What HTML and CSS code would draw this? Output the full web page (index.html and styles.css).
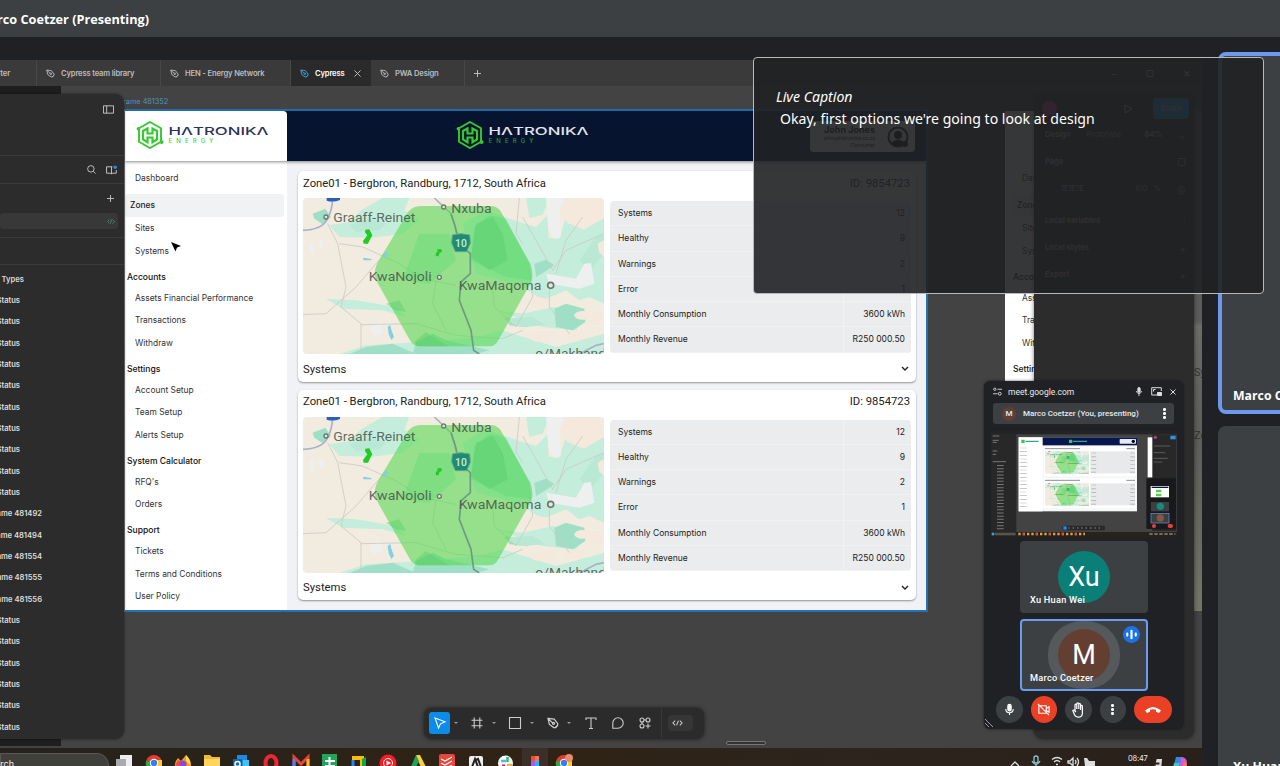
FILE: index.html
```html
<!DOCTYPE html>
<html lang="en">
<head>
<meta charset="utf-8">
<title>Marco Coetzer (Presenting)</title>
<link rel="stylesheet" href="styles.css">
</head>
<body>
<svg class="defs" aria-hidden="true">
  <symbol id="pen" viewBox="0 0 10 10"><g fill="none" stroke="currentColor" stroke-width="1"><path d="M.8 1.2 6 1.8 9 5.6 8.8 7 7.200 8.800 5.600 8.800 2 6.200Z M1 1.400 4.800 5"/><circle cx="5.400" cy="5.300" r=".9"/><path d="M6.800 8.900 9 6.800"/></g></symbol>
  <symbol id="mark" viewBox="0 0 28 28"><g fill="none" stroke="#35c932" stroke-width="1.900"><path d="M14 1 25 7.200V20.800L14 27 3 20.800V7.200Z"/><path d="M11.500 7.500 7 10v8.500l4.500 2.700v-4.700h5v4.700l4.500-2.700V10l-4.500-2.500v5h-5Z" stroke-width="2.200"/></g><g fill="#35c932"><circle cx="2.400" cy="7.800" r="1.800"/><circle cx="25.600" cy="21" r="1.900"/></g></symbol>
  <symbol id="map" viewBox="41 293 903 468" preserveAspectRatio="none">
    <rect x="41" y="293" width="903" height="468" fill="#f2ebdf"/>
    <g fill="#c5eddb">
      <path d="M120 375 180 365 215 330 280 293H360L345 330 390 360 340 400 250 412 150 410Z"/>
      <path d="M520 370 590 330 690 365 740 380 775 345 778 412 810 415 830 350 944 345V610L900 590 870 600 830 570 760 600 700 560 640 540 560 520Z"/>
      <path d="M110 595 200 600 320 620 350 650 280 630 160 625Z"/>
      <path d="M560 710 640 690 720 715 800 740 944 700V761H150L230 735 400 725Z"/>
      <path d="M620 630 700 640 790 620 900 640 860 690 760 680Z"/>
      <path d="M710 293h70l-20 50-40 10Z"/>
    </g>
    <g fill="#9fdfc6">
      <path d="M70 340 108 325 125 350 100 372 75 355Z"/>
      <path d="M735 490 770 478 795 495 770 512 740 530Z"/>
      <path d="M795 625 830 610 885 625 888 665 850 690 800 680Z"/>
      <path d="M380 725 430 700 470 720 600 750 560 761H370Z M230 740l80-10 70 31H180Z M650 650l40 10 30 20-60-5Z"/>
    </g>
    <g fill="#b9e8d4"><path d="M180 375l60-20 50 15-20 20-70 5Z M870 480l50-70 24-10v60l-40 50Z M640 655l90-5 40 25-80 5Z"/></g>
    <g fill="#f5e8dc"><ellipse cx="880" cy="645" rx="25" ry="13"/><ellipse cx="918" cy="655" rx="24" ry="16"/><ellipse cx="860" cy="705" rx="35" ry="14"/><path d="M810 293h134v60l-60 35-50-20-30-40Z M925 430l19-10v50l-15-15Z M700 700l90-5 10 16-60 14Z M690 610l60-20 40 10-30 25Z"/></g>
    <g fill="#eef0ef"><path d="M770 293h55l-15 40 5 75-20 8-18-30Z M770 520 860 535 885 490 905 488 915 550 870 565 780 550Z M90 420h12v25h-12Z M62 425h10v35h-10Z M240 680l30-15 10 30-25 10Z"/></g>
    <g fill="none" stroke="#c9cbc6" stroke-width="2.500">
      <path d="M115 370 145 430 170 560 155 620 215 670V761 M41 643 110 640 200 560 290 455 M150 430 220 440 320 485 400 535 500 555 M215 673 380 670 500 705 640 715 700 690 M440 540 430 610 470 690 M610 560 615 620 680 680 730 590 720 510 M690 293 680 400 700 430 M780 570V620L840 700 M944 400 830 450 790 510 740 420 700 350 M880 350 830 420 800 520"/>
    </g>
    <g fill="none" stroke="#a9b1c8" stroke-width="5"><path d="M41 390Q95 388 112 360T130 293 M435 293 485 340 495 370 510 440 M870 761 920 735 944 730"/></g>
    <path d="M395 317H605Q622 317 634 333L723 490Q734 520 726 545L627 720Q618 738 600 738H390Q372 738 362 720L263 545Q250 520 263 490L356 335Q370 317 395 317Z" fill="#4fd84a" fill-opacity=".56"/>
    <path d="M555 380 600 345 650 355 720 490 726 540 650 530 600 505 545 480Z M390 400 480 400 500 480 420 550 340 540Z" fill="#55d873" fill-opacity=".35"/>
    <path d="M290 610 330 600 350 635 320 630Z M560 370 610 350 640 400 655 480 600 510 545 470Z M375 725 410 695 440 715 480 738H385Z" fill="#5cce6c" fill-opacity=".45"/>
    <path d="M485 340 498 380 510 430 543 460V520L515 545 510 600 545 690 553 750 570 761" fill="none" stroke="#6c9c82" stroke-width="5"/>
    <path d="M112 293h40v6q-20 8-40 2Z" fill="#2860bd"/>
    <path d="M228 388l12-1 9 18-9 16-4 9h-13l-2-8 13-17-7-9Z M444 447l12-1 2 8-8 5-2 9-9-1 1-9 4-3Z" fill="#20cc24"/>
    <path d="M295 680l8-6 3 14 8 22-8 9-8-18Z M282 458l12-4v12l-10 6Z M222 472l24 4v4h-24Z" fill="#83cfe4"/>
    <path d="M489 404 515 400 541 404 543 428 532 454H498L487 428Z" fill="#208b75" stroke="#62a88b" stroke-width="3"/>
    <g fill="#dfe9e2" stroke="#6d7771" stroke-width="4"><circle cx="110" cy="350" r="6"/><circle cx="463" cy="320" r="6"/><circle cx="450" cy="531" r="6"/><circle cx="784" cy="555" r="9" stroke-width="5"/></g>
    <g font-family="Roboto" font-size="41" fill="#47534b" fill-opacity=".86">
      <text x="132" y="366" textLength="246" lengthAdjust="spacingAndGlyphs">Graaff-Reinet</text>
      <text x="486" y="338" textLength="121" lengthAdjust="spacingAndGlyphs">Nxuba</text>
      <text x="238" y="543" textLength="189" lengthAdjust="spacingAndGlyphs">KwaNojoli</text>
      <text x="508" y="569" textLength="248" lengthAdjust="spacingAndGlyphs">KwaMaqoma</text>
      <text x="738" y="773" textLength="212" lengthAdjust="spacingAndGlyphs">o/Makhand</text>
    </g>
    <text x="497" y="441" font-family="Roboto" font-size="31" font-weight="500" fill="#c9f0d5" textLength="36">10</text>
  </symbol>
</svg>

<header class="topbar"><span>Marco Coetzer (Presenting)</span></header>

<main class="stage">
  <section class="share">
    <nav class="tabs">
      <div class="tab tab-first"><span>Starter</span></div>
      <div class="tab tab-lib"><svg><use href="#pen"/></svg><span>Cypress team library</span></div>
      <div class="tab tab-hen"><svg><use href="#pen"/></svg><span>HEN - Energy Network</span></div>
      <div class="tab tab-on"><svg><use href="#pen"/></svg><span>Cypress</span><svg class="x" viewBox="0 0 8 8"><path d="M.5.5l7 7M7.500.5l-7 7"/></svg></div>
      <div class="tab tab-pwa"><svg><use href="#pen"/></svg><span>PWA Design</span></div>
      <svg class="plus" viewBox="0 0 8 8"><path d="M4 0v8M0 4h8"/></svg>
      <div class="wincontrols"><span>–</span><span>▢</span><span>✕</span></div>
    </nav>

    <div class="canvas">
      <div class="rail rail-top"></div>
      <div class="rail rail-bottom"></div>
      <span class="frame-label">Frame 481352</span>

      <article class="frame">
        <header class="app-head">
          <div class="brandbox">
            <svg class="brand" viewBox="0 0 134 28"><use href="#mark" width="28" height="28"/><text x="32.500" y="14.300" textLength="100" lengthAdjust="spacingAndGlyphs" class="word dark">HΛTRONIKΛ</text><text x="32.500" y="22" textLength="45" class="sub">ENERGY</text></svg>
          </div>
          <div class="bar">
            <svg class="brand" viewBox="0 0 134 28"><use href="#mark" width="28" height="28"/><text x="32.500" y="14.300" textLength="100" lengthAdjust="spacingAndGlyphs" class="word">HΛTRONIKΛ</text><text x="32.500" y="22" textLength="45" class="sub deep">ENERGY</text></svg>
            <div class="user"><div><b>John Jones</b><small>john@hatronika.co.za</small><small>Consumer</small></div>
              <svg viewBox="0 0 22 22"><circle cx="11" cy="11" r="9.500" fill="none" stroke="#111" stroke-width="2"/><circle cx="11" cy="9" r="4"/><path d="M4 17q7-7 14 0l-3 3H7Z"/><circle cx="18" cy="18" r="3"/></svg></div>
          </div>
        </header>
        <div class="app-body">
          <aside class="menu">
            <a class="first">Dashboard</a>
            <a class="on">Zones</a>
            <a>Sites</a><a>Systems</a>
            <h4>Accounts</h4><a>Assets Financial Performance</a><a>Transactions</a><a>Withdraw</a>
            <h4>Settings</h4><a>Account Setup</a><a>Team Setup</a><a>Alerts Setup</a>
            <h4>System Calculator</h4><a>RFQ's</a><a>Orders</a>
            <h4>Support</h4><a>Tickets</a><a>Terms and Conditions</a><a>User Policy</a>
          </aside>
          <div class="zones">
            <section class="zone">
              <header><span>Zone01 - Bergbron, Randburg, 1712, South Africa</span><span>ID: 9854723</span></header>
              <div class="zone-body">
                <svg class="map"><use href="#map"/></svg>
                <dl>
                  <dt>Systems</dt><dd>12</dd><dt>Healthy</dt><dd>9</dd><dt>Warnings</dt><dd>2</dd><dt>Error</dt><dd>1</dd><dt>Monthly Consumption</dt><dd>3600 kWh</dd><dt>Monthly Revenue</dt><dd>R250 000.50</dd>
                </dl>
              </div>
              <footer><span>Systems</span><svg viewBox="0 0 8 6"><path d="M1 1l3 3 3-3"/></svg></footer>
            </section>
            <section class="zone">
              <header><span>Zone01 - Bergbron, Randburg, 1712, South Africa</span><span>ID: 9854723</span></header>
              <div class="zone-body">
                <svg class="map"><use href="#map"/></svg>
                <dl>
                  <dt>Systems</dt><dd>12</dd><dt>Healthy</dt><dd>9</dd><dt>Warnings</dt><dd>2</dd><dt>Error</dt><dd>1</dd><dt>Monthly Consumption</dt><dd>3600 kWh</dd><dt>Monthly Revenue</dt><dd>R250 000.50</dd>
                </dl>
              </div>
              <footer><span>Systems</span><svg viewBox="0 0 8 6"><path d="M1 1l3 3 3-3"/></svg></footer>
            </section>
          </div>
        </div>
      </article>

      <article class="frame-next">
        <aside class="menu">
          <a class="first">Dashboard</a><a class="on">Zones</a><a>Sites</a><a>Systems</a>
          <h4>Accounts</h4><a>Assets</a><a>Transactions</a><a>Withdraw</a><h4>Settings</h4>
        </aside>
      </article>
      <div class="peek"><span>Systems</span><span>Zone01</span></div>

      <aside class="layers">
        <div class="layers-top"><svg viewBox="0 0 12 9"><path d="M.5.5h11v8H.5ZM4 .5v8"/></svg></div>
        <div class="layers-find"><svg viewBox="0 0 10 10"><circle cx="4.300" cy="4.300" r="3.600"/><path d="M7 7l2.500 2.500"/></svg><svg class="book" viewBox="0 0 12 10"><path d="M7 1.500H.6v7H5L6 9.500 7 8.500h4.200V5M6 1.500v8"/><circle cx="10" cy="2" r="1.900" fill="#2b8de0" stroke="none"/></svg></div>
        <div class="layers-add"><svg viewBox="0 0 8 8"><path d="M4 0v8M0 4h8"/></svg></div>
        <div class="layers-page"><svg viewBox="0 0 10 8"><path d="M3 1.500.8 4 3 6.500M7 1.500 9.200 4 7 6.500M5.800 1.500l-1.500 5"/></svg></div>
        <ul>
          <li class="wide">User Types</li>
          <li>Status</li><li>Status</li><li>Status</li><li>Status</li><li>Status</li><li>Status</li><li>Status</li><li>Status</li><li>Status</li><li>Status</li>
          <li class="fr">Frame 481492</li><li class="fr">Frame 481494</li><li class="fr">Frame 481554</li><li class="fr">Frame 481555</li><li class="fr">Frame 481556</li>
          <li>Status</li><li>Status</li><li>Status</li><li>Status</li><li>Status</li><li>Status</li>
        </ul>
      </aside>

      <aside class="props">
        <div class="props-top"><i class="ava"></i><svg viewBox="0 0 9 10"><path d="M1 1l7 4-7 4Z"/></svg><b>Share</b></div>
        <div class="row"><b>Design</b><span>Prototype</span><b class="end">84%</b><em>⌄</em></div>
        <div class="row"><b>Page</b><em class="end">▢</em></div>
        <div class="row"><span class="hex">1E1E1E</span><span class="end">100 &nbsp; %</span><em>◎</em></div>
        <div class="row gap"><b>Local variables</b><em class="end">⫶</em></div>
        <div class="row"><b>Local styles</b><em class="end">+</em></div>
        <div class="row"><b>Export</b><em class="end">+</em></div>
      </aside>

      <svg class="cursor" viewBox="0 0 10 10"><path d="M0 0 10 4 6 5.500 4.500 9.500Z"/></svg>

      <div class="tools">
        <span class="pick"><svg viewBox="0 0 14 14"><path d="M2 2l10 3.800-4.500 2L5.500 12Z"/></svg></span><i class="caret"></i>
        <svg class="t-frame" viewBox="0 0 14 14"><path d="M4.200 1.500v11M9.800 1.500v11M1.500 4.200h11M1.500 9.800h11"/></svg><i class="caret"></i>
        <svg class="t-rect" viewBox="0 0 14 14"><path d="M1.500 1.500h11v11h-11Z"/></svg><i class="caret"></i>
        <svg class="t-pen" viewBox="0 0 10 10"><use href="#pen"/></svg><i class="caret"></i>
        <svg class="t-text" viewBox="0 0 14 14"><path d="M2 4V2h10v2M7 2v10.500M5 12.500h4"/></svg>
        <svg class="t-note" viewBox="0 0 14 14"><path d="M1.800 12.200V7A5.200 5.200 0 1 1 7 12.200Z"/></svg>
        <svg class="t-res" viewBox="0 0 14 14"><circle cx="4" cy="4" r="2"/><circle cx="10" cy="4" r="2"/><circle cx="4" cy="10" r="2"/><path d="M10 7.500v5M7.500 10h5M6 4h2M4 6v2"/></svg>
        <span class="dev"><svg viewBox="0 0 12 8"><path d="M3.500 1.500 1 4l2.500 2.500M8.500 1.500 11 4 8.500 6.500M7 1.500l-2 5"/></svg></span>
      </div>
      <div class="hscroll"></div>
    </div>

    <footer class="taskbar">
      <div class="search">Search</div>
      <svg class="apps" viewBox="0 0 470 18">
        <rect x="412" y="0" width="26" height="18" fill="#3a3028"/>
        <g transform="translate(0 2)">
        <rect x="10" y="5" width="12" height="16" fill="#eee"/><rect x="6" y="9" width="10" height="12" fill="#aaa"/>
        <g id="chrome"><circle cx="44" cy="13" r="8" fill="#e53c2d"/><path d="M36 11q-1 5 2 9l6-7Z" fill="#2da44e"/><path d="M44 10h8v9h-6Z" fill="#ffc928"/><circle cx="44" cy="13" r="4.200" fill="#fff"/><circle cx="44" cy="13" r="3.200" fill="#357fe8"/></g>
        <path d="M65 19q-1-7 3-11l3 3 5-6q6 6 5 14Z" fill="#ff961f"/><path d="M65 16l3-6 4 3 5 6H66Z" fill="#e94c4b"/><circle cx="73" cy="14" r="3.500" fill="#8c48d2"/><path d="M76 5q6 6 4 10l-4-4Z" fill="#ffdc40"/>
        <path d="M94 5h6l2 2h8v12H94Z" fill="#f1bb32"/><path d="M94 9h16v10H94Z" fill="#ffd65b"/>
        <path d="M127 5h10v14h-10Z" fill="#2389d8"/><path d="M123 9h9v10h-9Z" fill="#0a67b8"/><circle cx="127.500" cy="14" r="2.500" fill="none" stroke="#fff" stroke-width="1.500"/><path d="M133 10h6v9h-6Z" fill="#42c2f5"/>
        <ellipse cx="161" cy="13" rx="5.500" ry="7" fill="none" stroke="#ee2635" stroke-width="4"/>
        <path d="M184 19V7l7 7 7-7v12" fill="none" stroke="#ea4335" stroke-width="3"/><path d="M184 9v10" stroke="#4285f4" stroke-width="3"/><path d="M198 9v10" stroke="#f5b82e" stroke-width="3"/>
        <rect x="212" y="4" width="15" height="16" fill="#25a35a"/><path d="M215 11h10M219.500 7v12M215 16h10" stroke="#fff" stroke-width="2"/>
        <path d="M242 8h10v11" fill="none" stroke="#fbbc04" stroke-width="4"/><path d="M243 10v9" stroke="#2684fc" stroke-width="3"/><path d="M252 9l4-2v12h-4Z" fill="#0aaa4c"/>
        <circle cx="278" cy="13" r="8.500" fill="#f51d25"/><circle cx="278" cy="13" r="4.500" fill="none" stroke="#fff"/><path d="M276.500 10.500 281 13l-4.500 2.500Z" fill="#fff"/>
        <path d="M306 5h4l7 14h-5l-4-8Z" fill="#ffcf36"/><path d="M306 5l3 6-4 8h-5Z" fill="#1ea55b"/>
        <rect x="329" y="4" width="16" height="17" rx="2" fill="#e8473c"/><path d="M331 9l4 2 7-4M331 13l4 2 7-4M331 17l4 2 7-4" fill="none" stroke="#fff" stroke-width="1.200"/>
        <rect x="359" y="6" width="14" height="14" rx="2" fill="#eee"/><path d="M362 17l3-8 3 8M366 10l2-1 3 8" fill="none" stroke="#222" stroke-width="2"/>
        <circle cx="395.500" cy="13" r="7.500" fill="#f7f7f7"/><path d="M391 11h5" stroke="#36c5f0" stroke-width="2.500"/><path d="M397.500 7v5" stroke="#2eb67d" stroke-width="2.500"/><path d="M392 16h3" stroke="#e01e5a" stroke-width="3"/><path d="M397 15h5" stroke="#ecb22e" stroke-width="2.500"/>
        <path d="M421 6h4v5h-4Z" fill="#f24e1e"/><path d="M425 6h4v5h-4Z" fill="#ff7262"/><path d="M421 11h4v7h-4Z" fill="#a259ff"/><path d="M425 11h4v7h-4Z" fill="#1abcfe"/>
        <use href="#chrome" x="410"/><circle cx="459" cy="8" r="4" fill="#e88c6a"/>
        </g>
      </svg>
      <div class="tray">
        <svg viewBox="0 0 90 18"><g transform="translate(0 2)"><g fill="none" stroke="#ddd" stroke-width="1.300"><path d="M2 16l4-4 4 4"/><rect x="25" y="6" width="4" height="7" rx="2" stroke="#8ec4cf"/><path d="M23 11q4 7 8 0M27 14v3" stroke="#8ec4cf"/><path d="M43 9.500q5-4 10 0M45 12q3-3 6 0M47 14.500h2" /><path d="M59 11h2l3-3v8l-3-3h-2ZM66 10q2 2 0 4M68 8q3 4 0 8"/></g><path d="M75 8h3l2 3h6v5H76Z" fill="#ddd"/></g></svg>
        <span>08:47</span>
        <svg class="bell" viewBox="0 0 10 12"><path d="M3 1h6L8 10H1l1-3h4V5H2Z" fill="#ddd"/></svg>
        <svg class="copilot" viewBox="0 0 16 12"><path d="M4 1h6l-4 11H1Z" fill="#2b8cec"/><path d="M9 1q5 0 6 5l-1 6H7Z" fill="#d05bd7"/><path d="M2 7h6l-1 5H1Z" fill="#42c3b5"/><path d="M12 6l3 2-1 4h-4Z" fill="#f2844b"/></svg>
      </div>
    </footer>

    <section class="pip">
      <header class="pip-title">
        <svg viewBox="0 0 10 9"><path d="M0 7h5M5 2h5"/><circle cx="2" cy="2" r="1.300"/><circle cx="7.500" cy="7" r="1.600"/></svg><span>meet.google.com</span>
        <svg class="mic" viewBox="0 0 8 10"><rect x="2.700" y=".5" width="2.600" height="5.500" rx="1.300" fill="#ddd"/><path d="M.8 4.500q3.200 6 6.400 0M4 7.500V10"/></svg>
        <svg class="back" viewBox="0 0 11 9"><path d="M6 8H.7V.7h9.600V4M2.500 4.500v-2h2"/><path d="M6.500 5.500h4v3h-4Z" fill="#ddd"/></svg>
        <svg class="close" viewBox="0 0 8 8"><path d="M1.500 1.500l5 5M6.500 1.500l-5 5"/></svg>
      </header>
      <div class="presenter"><i>M</i><span>Marco Coetzer (You, presenting)</span><b class="dots"><u></u><u></u><u></u></b></div>
      <svg class="mini" viewBox="0 0 558 351" preserveAspectRatio="none">
        <rect width="558" height="351" fill="#434343"/><rect width="558" height="10" fill="#242424"/><rect y="8" width="76" height="295" fill="#282828"/>
        <path d="M5 15h20M5 28h18M5 34h12M5 60h14M5 70h10M5 92h40" stroke="#777" stroke-width="3"/>
        <path d="M28 102V298" stroke="#777" stroke-width="20" stroke-dasharray="3 6.500"/>
        <rect x="83" y="19" width="355" height="222" fill="#f4f6f7"/><rect x="83" y="19" width="72" height="222" fill="#fff"/><rect x="155" y="19" width="283" height="24" fill="#07174d"/>
        <path d="M91 31h10M234 31h10" stroke="#36c94a" stroke-width="10"/><path d="M103 31h40M246 31h42" stroke="#38a68a" stroke-width="4"/><rect x="386" y="24" width="49" height="14" rx="2" fill="#e8e8ee"/><circle cx="427" cy="31" r="5"/>
        <path d="M97 50v184" stroke="#bbb" stroke-width="22" stroke-dasharray="2 9"/>
        <rect x="159" y="47" width="276" height="89" fill="#fff"/><rect x="159" y="142" width="276" height="90" fill="#fff"/>
        <path d="M162 53h105M406 53h26M162 148h105M406 148h26" stroke="#777" stroke-width="2.500"/>
        <use href="#map" x="162" y="60" width="132" height="68"/><use href="#map" x="162" y="156" width="132" height="68"/>
        <rect x="298" y="61" width="134" height="66" fill="#e8e9eb"/><rect x="298" y="157" width="134" height="66" fill="#e8e9eb"/>
        <path d="M308 65v61M425 65v61M308 161v61M425 161v61" stroke="#aaa" stroke-width="15" stroke-dasharray="2 9.500"/>
        <rect x="470" y="19" width="16" height="120" fill="#fff"/><rect x="484" y="10" width="72" height="290" fill="#282828"/><path d="M488 45h50M488 65h35M488 82h42M488 93h25" stroke="#666" stroke-width="2.500"/><rect x="538" y="14" width="16" height="11" fill="#2794e8"/><circle cx="493" cy="19" r="5" fill="#a9447a"/>
        <rect x="466" y="142" width="89" height="152" rx="4" fill="#18191b"/><rect x="479" y="165" width="55" height="34" fill="#fff"/><path d="M482 169h50" stroke="#07174d" stroke-width="4"/><path d="M495 180h16M495 192h16" stroke="#5bc952" stroke-width="8"/><rect x="480" y="213" width="54" height="28" fill="#3c4043"/><circle cx="508" cy="226" r="11" fill="#138b80"/><rect x="480" y="247" width="54" height="29" fill="#3c4043" stroke="#6b95e5" stroke-width="2"/><circle cx="508" cy="261" r="11" fill="#8a5543"/><g fill="#e94235"><circle cx="489" cy="285" r="6"/><rect x="530" y="279" width="16" height="12" rx="6"/></g>
        <rect x="214" y="284" width="128" height="14" rx="4" fill="#292929"/><rect x="217" y="286" width="10" height="10" fill="#1790f4"/>
        <path d="M232 291h100" stroke="#999" stroke-width="3" stroke-dasharray="4 9"/>
        <rect y="303" width="558" height="15" fill="#292219"/><path d="M2 309h8" stroke="#31a6ef" stroke-width="8"/><path d="M12 309h62" stroke="#555" stroke-width="8"/><path d="M82 309h200" stroke="#dda050" stroke-width="7" stroke-dasharray="7 6"/><path d="M96 309h180" stroke="#d94442" stroke-width="7" stroke-dasharray="5 34"/><path d="M475 309h78" stroke="#bbb" stroke-width="3" stroke-dasharray="10 5"/><rect y="318" width="558" height="33" fill="#202124"/>
      </svg>
      <div class="person"><i class="teal">Xu</i><span>Xu Huan Wei</span></div>
      <div class="person talking"><i class="halo"></i><i class="brown">M</i><span>Marco Coetzer</span><b><svg viewBox="0 0 16 16"><path d="M4 7v2M8 4.500v7M12 7v2"/></svg></b></div>
      <div class="calls">
        <span><svg viewBox="0 0 14 14"><rect x="5.200" y="1.500" width="3.600" height="7" rx="1.800" fill="#fff"/><path d="M3 6.500q0 4 4 4t4-4M7 10.500v2.500"/></svg></span>
        <span class="red"><svg viewBox="0 0 14 14"><path d="M2 3h8v8H2ZM10 6l3-2v6l-3-2M1 1l12 12"/></svg></span>
        <span><svg class="hand" viewBox="0 0 14 16"><path d="M4 9V3.200q0-1 .9-1t.9 1V7M5.800 7V1.800q0-1 1-1t1 1V7M7.800 7V2.500q0-1 .9-1t.9 1V8M9.600 8V4.300q0-1 .9-1t.9 1V11q0 4.200-4.200 4.200-2.500 0-3.700-2.500L1.800 8.500q1-1 2.200.5L5 10"/></svg></span>
        <span><b class="dots"><u></u><u></u><u></u></b></span>
        <span class="red end"><svg viewBox="0 0 18 10"><path d="M1 5.500Q9-1.500 17 5.500L15 8l-3-1.200V4.700Q9 3.800 6 4.700v2.100L3 8Z" fill="#fff" stroke="none"/></svg></span>
      </div>
      <svg class="grip" viewBox="0 0 8 8"><path d="M0 0l8 8M0 4l4 4"/></svg>
    </section>
  </section>

  <aside class="people">
    <div class="tile active"><span>Marco Coetzer</span></div>
    <div class="tile"><span>Xu Huan Wei</span></div>
  </aside>

  <section class="caption"><em>Live Caption</em><p>Okay, first options we're going to look at design</p></section>
</main>
</body>
</html>
```

FILE: styles.css
```css
* { box-sizing: border-box; }
body { margin: 0; width: 1280px; height: 766px; overflow: hidden; display: flex; flex-direction: column; background: #202124; font-family: Inter, sans-serif; }
svg { display: block; flex: none; }
.defs { position: absolute; width: 0; height: 0; }
i, em { font-style: normal; }

.topbar { height: 37px; flex: none; background: #3c4043; color: #fff; display: flex; align-items: center; }
.topbar span { width: 149px; display: flex; justify-content: flex-end; white-space: nowrap; font: 700 12.700px "Open Sans", sans-serif; }
.stage { flex: 1; display: flex; padding-top: 15px; position: relative; overflow: hidden; }
.share { width: 1202px; margin-top: 8px; display: flex; flex-direction: column; position: relative; flex: none; }

.tabs { height: 26px; flex: none; display: flex; align-items: stretch; background: #3a3a3a; color: #bdbdbd; font-size: 7.600px; font-weight: 600; letter-spacing: -.15px; }
.tab { display: flex; align-items: center; gap: 6px; padding-left: 9px; border-right: 1px solid #484848; white-space: nowrap; }
.tab svg { width: 9px; height: 9px; color: #bbb; }
.tab-first { width: 37px; padding: 0 26px 0 0; justify-content: flex-end; }
.tab-lib { width: 124px; }
.tab-hen { width: 130px; }
.tab-on { width: 80px; background: #2a2a2a; color: #fff; border: 0; }
.tab-on svg { color: #45a5e8; }
.tab .x { width: 7px; height: 7px; margin-left: 4px; }
.x, .plus { fill: none; stroke: #ccc; stroke-width: 1; }
.tab-pwa { width: 94px; }
.plus { width: 7px; height: 7px; align-self: center; margin-left: 9px; }
.wincontrols { margin-left: auto; width: 90px; display: flex; justify-content: space-between; align-items: center; padding-right: 11px; font-size: 9px; }

.canvas { flex: 1; position: relative; background: #434343; overflow: hidden; }
.rail { position: absolute; left: 0; width: 61px; height: 10px; background: #1e1e1e; }
.rail-top { top: 0; }
.rail-bottom { bottom: 2px; }
.frame-label { position: absolute; left: 119px; top: 11px; font-size: 7.300px; color: #4f94bd; }
.frame { position: absolute; left: 124px; top: 23px; width: 804px; height: 503px; border: 2px solid #2272b4; border-left: 1px solid #777; background: #f0f2f5; display: flex; flex-direction: column; }
.app-head { height: 50px; flex: none; display: flex; background: #07142f; box-shadow: 0 1px 3px #0007; position: relative; }
.brandbox { width: 162px; background: #fff; border-radius: 0 4px 0 0; padding: 10px 0 0 11px; }
.bar { flex: 1; display: flex; justify-content: space-between; padding: 10px 11px 0 169px; }
.brand { width: 134px; height: 28px; overflow: visible; }
.word { font: 500 11px Inter, sans-serif; fill: #e3e4ee; }
.dark { fill: #2a3358; }
.sub { font: 500 6px Inter, sans-serif; fill: #45cf45; }
.deep { fill: #239b30; }
.user { width: 105px; height: 31px; background: #fff; border-radius: 4px; display: flex; justify-content: flex-end; align-items: center; gap: 12px; padding-right: 6px; text-align: right; }
.user b, .user small { display: block; font-size: 9px; line-height: 10px; }
.user small { font-size: 5px; line-height: 7px; }
.user svg { width: 22px; height: 22px; }
.app-body { flex: 1; display: flex; min-height: 0; }
.menu { width: 162px; background: #fff; padding: 5.500px 3px 0 0; color: #333; font-size: 8.420px; }
.menu a, .menu h4 { display: block; height: 22.400px; line-height: 22.400px; padding-left: 10px; white-space: nowrap; }
.menu .first { margin-bottom: 5.500px; }
.menu .on { height: 23px; line-height: 23px; background: #f1f2f4; border-radius: 3px; padding-left: 5px; font-weight: 500; color: #222; }
.menu h4 { margin: 0; height: 24.800px; line-height: 19px; padding: 5.500px 0 0 2px; font-size: 8.550px; font-weight: 500; color: #111; }

.zones { flex: 1; padding: 10px 10px 0 11px; display: flex; flex-direction: column; gap: 8px; }
.zone { height: 210.500px; background: #fff; border-radius: 5px; box-shadow: 0 1px 2px #0006; padding: 0 5px; font-family: Roboto, sans-serif; color: #222; }
.zone header { height: 27px; display: flex; justify-content: space-between; align-items: center; font-size: 11.270px; padding: 0 1px 3px 0; }
.zone-body { display: flex; gap: 6px; }
.map { width: 301px; height: 156px; border-radius: 4px; overflow: hidden; }
.zone dl { margin: 3px 0 0; flex: 1; height: 151.500px; display: grid; grid-template-columns: 1fr 67px; grid-template-rows: repeat(6, 1fr); border-radius: 4px; overflow: hidden; background: #ebecee; font: 8.520px Inter, sans-serif; }
.zone dt, .zone dd { margin: 0; display: flex; align-items: center; border-bottom: 1px solid #f1f2f3; }
.zone dt { padding-left: 8px; border-right: 1px solid #f1f2f3; }
.zone dd { justify-content: flex-end; padding-right: 6px; white-space: nowrap; }
.zone footer { height: 28px; display: flex; justify-content: space-between; align-items: center; font-size: 11.300px; padding-top: 2px; padding-right: 2px; }
.zone footer svg { width: 8px; height: 6px; fill: none; stroke: #222; stroke-width: 1.400; }

.frame-next { position: absolute; left: 1005px; top: 25px; width: 29px; height: 499px; background: #fff; overflow: hidden; padding-top: 50px; }
.frame-next .menu { padding-left: 7px; }
.frame-next h4 { padding-left: 1px; }
.peek { position: absolute; left: 1194px; top: 25px; width: 8px; height: 500px; overflow: hidden; background: linear-gradient(#5c5c5b, #5c5c5b 42%, #6b6d68 43%, #646462 53%, #5c5e58 66%, #737568); color: #333; font: 11px Roboto, sans-serif; display: flex; flex-direction: column; gap: 50px; padding-top: 255px; }

.layers { position: absolute; left: 0; top: 8px; width: 124px; height: 645px; background: #2c2c2c; border-radius: 0 9px 9px 0; box-shadow: 0 0 3px #0008; overflow: hidden; color: #ddd; }
.layers svg { fill: none; stroke: #ccc; stroke-width: 1; }
.layers > div { display: flex; justify-content: flex-end; align-items: center; border-bottom: 1px solid #3b3b3b; }
.layers .layers-top { height: 62px; padding: 0 10px 30px 0; }
.layers-top svg { width: 11px; height: 9px; }
.layers .layers-find { height: 28px; gap: 10px; padding-right: 7px; }
.layers-find svg { width: 9px; height: 9px; }
.layers-find .book { width: 11px; height: 10px; }
.layers .layers-add { height: 28px; padding-right: 10px; border: 0; }
.layers-add svg { width: 7px; height: 7px; }
.layers .layers-page { height: 16px; width: 118px; background: #383838; padding-right: 3px; border: 0; border-radius: 3px; margin-top: 1px; }
.layers .layers-page svg { width: 8px; height: 7px; stroke: #3f9c7a; }
.layers ul { margin: 8px 0 0; padding: 28px 0 0; list-style: none; font-size: 7.600px; font-weight: 600; border-top: 1px solid #3b3b3b; box-shadow: inset 0 26px #2c2c2c, inset 0 27px #3b3b3b; }
.layers li { width: 20px; height: 21.330px; display: flex; align-items: center; justify-content: flex-end; white-space: nowrap; padding-top: 4px; }
.layers li.fr { width: 42px; }
.layers li.wide { width: 24px; height: 22px; }

.props { position: absolute; left: 1034px; top: 8px; width: 160px; height: 645px; background: #2c2c2c; border-radius: 0 0 9px 9px; box-shadow: 0 0 4px #0008; color: #aaa; font-size: 7.500px; }
.props-top { height: 29px; display: flex; align-items: center; padding: 0 5px 0 8px; }
.ava { width: 15px; height: 15px; border-radius: 50%; background: #c93c91; margin-right: auto; }
.props-top svg { width: 9px; height: 10px; fill: none; stroke: #ccc; margin-right: 20px; }
.props-top b { width: 36px; height: 21px; background: #128bdd; border-radius: 3px; line-height: 21px; text-align: center; }
.row { height: 27px; display: flex; align-items: center; gap: 16px; padding: 0 8px 4px 11px; }
.row.gap { margin-top: 5px; }
.row .end { margin-left: auto; }
.row .hex { padding-left: 16px; }
.row em { font-size: 10px; }

.cursor { position: absolute; left: 171px; top: 156px; width: 10px; height: 10px; }
.tools { position: absolute; left: 424px; top: 622px; width: 280px; height: 31px; border-radius: 8px; background: #2b2b2b; box-shadow: 0 0 4px #0009; display: flex; align-items: center; padding: 0 0 1px 5px; }
.tools svg { width: 14px; height: 14px; fill: none; stroke: #ccc; stroke-width: 1.100; color: #ccc; }
.tools .pick { width: 21px; height: 22px; border-radius: 3px; background: #0c8ce9; display: grid; place-items: center; }
.tools .pick svg { stroke: #fff; }
.caret { width: 4px; height: 2px; background: #999; clip-path: polygon(0 0, 100% 0, 50% 100%); margin-left: 4px; }
.t-frame { margin-left: 12px; }
.t-frame + .caret, .t-rect + .caret, .t-pen + .caret { margin-left: 8px; }
.t-rect { margin-left: 12px; }
.t-pen { margin-left: 13px; }
.tools .t-pen { width: 12px; height: 12px; }
.t-text { margin-left: 13px; }
.t-note { margin-left: 13px; }
.t-res { margin-left: 13px; }
.dev { margin-left: 9px; height: 30px; border-left: 1px solid #393939; display: flex; align-items: center; padding-left: 6px; }
.tools .dev svg { box-sizing: content-box; width: 11px; height: 8px; padding: 4px 10px 4px 4px; background: #363636; border-radius: 4px; }
.hscroll { position: absolute; left: 726px; top: 655px; width: 40px; height: 4px; border: 1px solid #777; border-radius: 2px; background: #333; }

.taskbar { height: 18px; flex: none; background: linear-gradient(90deg, #25221c, #302315 45%, #2c241d 70%, #282019); display: flex; color: #eee; overflow: hidden; }
.search { width: 109px; height: 24px; margin-top: 5px; border: 1px solid #5a5a52; border-radius: 0 12px 0 0; background: #40403b; font-size: 9px; padding-top: 4px; display: flex; justify-content: flex-end; padding-right: 94px; white-space: nowrap; }
.apps { width: 470px; height: 18px; margin-left: 1px; }
.tray { margin-left: auto; display: flex; width: 193px; }
.tray svg { width: 90px; height: 18px; }
.tray span { margin-left: 29px; width: 24px; padding-top: 6px; font-size: 7.500px; line-height: 10px; letter-spacing: -.2px; }
.tray .bell { width: 9px; height: 11px; margin: 10px 0 0 2px; }
.tray .copilot { width: 16px; height: 12px; margin: 8px 0 0 9px; }

.pip { position: absolute; left: 984px; top: 321px; width: 199px; height: 348px; background: #202124; border-radius: 6px; box-shadow: 0 0 3px #000a; color: #e8eaed; }
.pip-title { height: 21px; display: flex; align-items: center; padding: 0 6px 0 9px; font: 8.500px Roboto, sans-serif; }
.pip-title svg { width: 9px; height: 9px; fill: none; stroke: #ddd; }
.pip-title span { margin: 0 auto 0 6px; }
.pip-title .mic { width: 8px; }
.pip-title .back { width: 11px; margin-left: 8px; }
.pip-title .close { width: 8px; height: 8px; margin-left: 7px; }
.presenter { margin: 1px 9px 0 9px; height: 21px; border-radius: 3px; background: #3c4043; display: flex; align-items: center; font: 500 8px Roboto, sans-serif; }
.presenter i { width: 14px; height: 14px; margin: 0 7px 0 9px; border-radius: 50%; background: #613f35; display: grid; place-items: center; }
.dots { display: flex; flex-direction: column; gap: 1.500px; }
.dots u { width: 2.600px; height: 2.600px; border-radius: 50%; background: #fff; }
.presenter .dots { margin: 0 8px 0 auto; }
.mini { width: 186px; height: 117px; margin: 7px 0 0 7px; }
.person { position: relative; width: 128px; height: 72px; margin: -7px 0 0 36px; border-radius: 4px; background: #3c4043; display: grid; place-items: center; }
.person i { width: 52px; height: 52px; border-radius: 50%; display: grid; place-items: center; font: 27px Roboto, sans-serif; color: #fff; grid-area: 1 / 1; }
.person .teal { background: #0a7f78; }
.person .brown { background: #633f32; }
.person .halo { width: 72px; height: 68px; background: #56595c; border-radius: 48%; }
.person span { position: absolute; left: 10px; bottom: 8px; font: 500 9.200px Roboto, sans-serif; color: #fff; letter-spacing: .25px; }
.person.talking { margin-top: 6px; border: 2.500px solid #6c9cf0; overflow: hidden; }
.person.talking span { left: 8px; bottom: 6px; }
.person b { position: absolute; right: 6px; top: 5px; width: 17px; height: 17px; border-radius: 50%; background: #1a73e8; }
.person b svg { width: 17px; height: 17px; stroke: #fff; stroke-width: 2; stroke-linecap: round; }
.calls { display: flex; margin: 5px 0 0 12px; gap: 8px; }
.calls span { width: 26.500px; height: 27px; border-radius: 50%; background: #3c4043; display: grid; place-items: center; }
.calls svg { width: 13px; height: 13px; fill: none; stroke: #fff; stroke-width: 1.200; }
.calls .hand { width: 14px; height: 16px; }
.calls .red { background: #ea4026; }
.calls .end { width: 38px; border-radius: 14px; }
.calls .end svg { width: 18px; height: 10px; }
.grip { position: absolute; left: 1px; bottom: 2px; width: 8px; height: 8px; stroke: #999; fill: none; }

.people { width: 120px; flex: none; margin-left: 16px; display: flex; flex-direction: column; gap: 12px; }
.tile { height: 362px; flex: none; border-radius: 8px; background: #3c4043; color: #fff; display: flex; align-items: flex-end; padding: 0 0 10px 15px; font: 700 12.300px "Open Sans", sans-serif; white-space: nowrap; }
.tile.active { border: 4px solid #6d98ee; padding: 0 0 6px 11px; }
.tile:not(.active) { padding-bottom: 13px; }

.caption { position: absolute; left: 753px; top: 20px; width: 511px; height: 237px; border: 1.500px solid #b9b9b9; border-radius: 4px; background: rgba(32, 33, 36, .9); color: #fff; padding: 28px 22px; font: 14.100px/22px "Noto Sans", sans-serif; }
.caption em { font-style: italic; }
.caption p { margin: 0 0 0 4px; white-space: nowrap; }
```
